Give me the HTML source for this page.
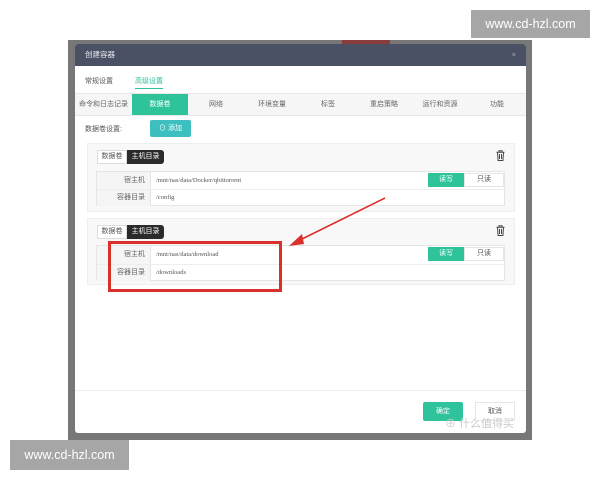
<!DOCTYPE html>
<html><head><meta charset="utf-8"><style>
*{margin:0;padding:0;box-sizing:border-box}
body{width:600px;height:480px;background:#fff;position:relative;overflow:hidden;font-family:"Liberation Sans","Noto Sans CJK SC",sans-serif;font-size:7px;line-height:9px;color:#555}
.a{position:absolute}
.wm{background:#a6a6a6;color:#fff;font-size:12.5px;text-align:center;line-height:28px}
.tab{position:absolute;top:0;height:21px;line-height:21px;text-align:center;color:#666}
.lbl{position:absolute;text-align:right;color:#666;line-height:17px}
.mono{font-family:"Liberation Serif",serif;font-size:6.5px;color:#555;line-height:17px}
</style></head><body>
<div class="a wm" style="left:471px;top:10px;width:119px;height:28px">www.cd-hzl.com</div>
<div class="a wm" style="left:10px;top:440px;width:119px;height:30px;line-height:30px">www.cd-hzl.com</div>
<div class="a" style="left:68px;top:40px;width:464px;height:400px;background:#777"></div>
<div class="a" style="left:342px;top:40px;width:48px;height:4px;background:#8a3b3b"></div>
<div class="a" style="left:75px;top:44px;width:451px;height:389px;background:#fff;border-radius:3px;overflow:hidden">
 <div class="a" style="left:0;top:0;width:451px;height:22px;background:#4b5165;color:#e8e8ee;line-height:22px;padding-left:10px;font-size:7.5px">创建容器<span style="position:absolute;right:10px;color:#aab">×</span></div>
 <div class="a" style="left:10px;top:33px;color:#555">常规设置</div>
 <div class="a" style="left:60px;top:33px;color:#2fbf9a;border-bottom:1px solid #2fbf9a;padding-bottom:2px">高级设置</div>
 <div class="a" style="left:0;top:49px;width:451px;height:23px;background:#f6f6f6;border-top:1px solid #e8e8e8;border-bottom:1px solid #e8e8e8">
  <div class="tab" style="left:0;width:57px">命令和日志记录</div>
  <div class="tab" style="left:57px;width:56px;background:#2ec39b;color:#fff">数据卷</div>
  <div class="tab" style="left:113px;width:56px">网络</div>
  <div class="tab" style="left:169px;width:56px">环境变量</div>
  <div class="tab" style="left:225px;width:56px">标签</div>
  <div class="tab" style="left:281px;width:56px">重启策略</div>
  <div class="tab" style="left:337px;width:56px">运行和资源</div>
  <div class="tab" style="left:393px;width:58px">功能</div>
 </div>
 <div class="a" style="left:10px;top:81px">数据卷设置:</div>
 <div class="a" style="left:75px;top:76px;width:41px;height:17px;background:#3dbfbf;color:#fff;line-height:17px;text-align:center;border-radius:2px">⊙ 添加</div>

 <div class="a" style="left:12px;top:99px;width:428px;height:69px;background:#f8f8f8;border:1px solid #eee">
  <div class="a" style="left:9px;top:6px;width:30px;height:14px;line-height:12px;text-align:center;background:#fff;border:1px solid #ddd">数据卷</div>
  <div class="a" style="left:39px;top:6px;width:37px;height:14px;line-height:14px;text-align:center;background:#2b2b2b;color:#fff;border-radius:0 3px 3px 0">主机目录</div>
  <svg class="a" style="right:9px;top:6px" width="9" height="11" viewBox="0 0 9 11"><path d="M0.5 2.2h8M3 2V0.8h3V2M1.5 2.5l0.6 8h4.8l0.6-8M3.5 4v5M5.5 4v5" fill="none" stroke="#444" stroke-width="1"/></svg>
  <div class="a" style="left:8px;top:27px;width:409px;height:35px;border:1px solid #e5e5e5;background:#fff">
   <div class="a" style="left:0;top:0;width:54px;height:34px;background:#f5f5f5;border-right:1px solid #e5e5e5"></div>
   <div class="a" style="left:0;top:17px;width:409px;border-top:1px solid #eee"></div>
   <div class="lbl" style="left:0;top:0;width:48px">宿主机</div>
   <div class="lbl" style="left:0;top:17px;width:48px">容器目录</div>
   <div class="a mono" style="left:59px;top:0">/mnt/nas/data/Docker/qbittorrent</div>
   <div class="a mono" style="left:59px;top:17px">/config</div>
   <div class="a" style="left:331px;top:1px;width:36px;height:14px;background:#2ec39b;color:#fff;text-align:center;line-height:14px">读写</div>
   <div class="a" style="left:367px;top:1px;width:40px;height:14px;border:1px solid #e5e5e5;text-align:center;line-height:12px">只读</div>
  </div>
 </div>

 <div class="a" style="left:12px;top:174px;width:428px;height:67px;background:#f8f8f8;border:1px solid #eee">
  <div class="a" style="left:9px;top:6px;width:30px;height:14px;line-height:12px;text-align:center;background:#fff;border:1px solid #ddd">数据卷</div>
  <div class="a" style="left:39px;top:6px;width:37px;height:14px;line-height:14px;text-align:center;background:#2b2b2b;color:#fff;border-radius:0 3px 3px 0">主机目录</div>
  <svg class="a" style="right:9px;top:6px" width="9" height="11" viewBox="0 0 9 11"><path d="M0.5 2.2h8M3 2V0.8h3V2M1.5 2.5l0.6 8h4.8l0.6-8M3.5 4v5M5.5 4v5" fill="none" stroke="#444" stroke-width="1"/></svg>
  <div class="a" style="left:8px;top:26px;width:409px;height:36px;border:1px solid #e5e5e5;background:#fff">
   <div class="a" style="left:0;top:0;width:54px;height:35px;background:#f5f5f5;border-right:1px solid #e5e5e5"></div>
   <div class="a" style="left:0;top:18px;width:409px;border-top:1px solid #eee"></div>
   <div class="lbl" style="left:0;top:0;width:48px">宿主机</div>
   <div class="lbl" style="left:0;top:18px;width:48px">容器目录</div>
   <div class="a mono" style="left:59px;top:0">/mnt/nas/data/download</div>
   <div class="a mono" style="left:59px;top:18px">/downloads</div>
   <div class="a" style="left:331px;top:1px;width:36px;height:14px;background:#2ec39b;color:#fff;text-align:center;line-height:14px">读写</div>
   <div class="a" style="left:367px;top:1px;width:40px;height:14px;border:1px solid #e5e5e5;text-align:center;line-height:12px">只读</div>
  </div>
 </div>

 <div class="a" style="left:0;top:346px;width:451px;border-top:1px solid #eee"></div>
 <div class="a" style="left:348px;top:358px;width:40px;height:19px;background:#2ec39b;color:#fff;text-align:center;line-height:19px;border-radius:2px">确定</div>
 <div class="a" style="left:400px;top:358px;width:40px;height:19px;border:1px solid #e5e5e5;text-align:center;line-height:17px">取消</div>
 <div class="a" style="left:370px;top:374px;color:#ccc;font-size:11px;line-height:13px">⊕ 什么值得买</div>
</div>
<div class="a" style="left:108px;top:241px;width:174px;height:51px;border:3px solid #d9302c"></div>
<svg class="a" style="left:0;top:0" width="600" height="480"><line x1="385" y1="198" x2="298" y2="241" stroke="#d9302c" stroke-width="1.6"/><polygon points="289,246 302,234 304,244" fill="#d9302c"/></svg>
</body></html>
